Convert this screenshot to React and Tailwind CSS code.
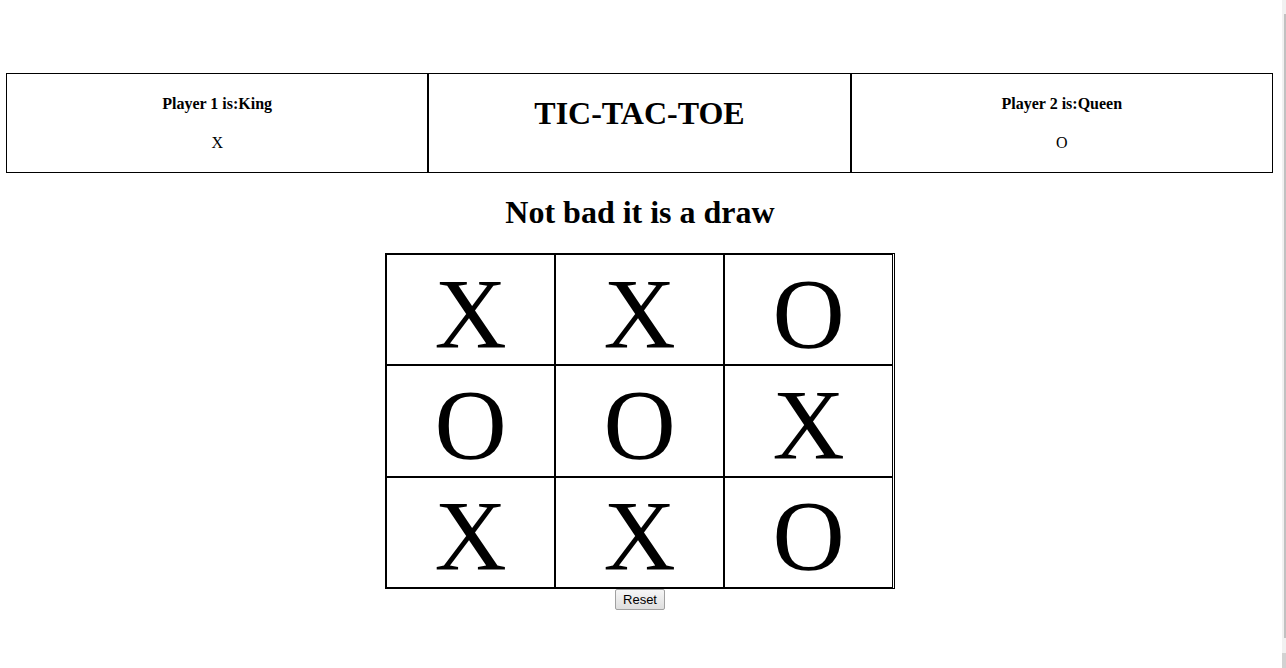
import { useState } from "react";

const finishedGame = ["X", "X", "O", "O", "O", "X", "X", "X", "O"];

const lines = [
  [0, 1, 2], [3, 4, 5], [6, 7, 8],
  [0, 3, 6], [1, 4, 7], [2, 5, 8],
  [0, 4, 8], [2, 4, 6],
];

function getMessage(cells) {
  const line = lines.find(([a, b, c]) => cells[a] && cells[a] === cells[b] && cells[b] === cells[c]);
  if (line) return cells[line[0]] === "X" ? "King wins" : "Queen wins";
  return cells.every(Boolean) ? "Not bad it is a draw" : "";
}

function Player({ number, name, mark }) {
  return (
    <section className="flex-1 border border-black pt-[21px]">
      <h4 className="text-[16px] font-bold leading-[18px]">Player {number} is:{name}</h4>
      <p className="mt-[21px] text-[16px] leading-[18px]">{mark}</p>
    </section>
  );
}

function Board({ cells, onPlay }) {
  return (
    <div className="grid h-[336px] w-[510px] grid-cols-[repeat(3,169px)] grid-rows-3 border border-black">
      {cells.map((mark, i) => (
        <button
          key={i}
          type="button"
          aria-label={`Square ${i + 1} ${mark}`}
          onClick={() => onPlay(i)}
          className="flex min-h-0 items-center justify-center border border-black pt-2 text-[100px] leading-[100px]"
        >
          {mark}
        </button>
      ))}
    </div>
  );
}

function ScrollTrack() {
  return (
    <div aria-hidden="true" className="flex w-1 shrink-0 flex-col bg-[#f1f1f1] pt-3.5">
      <div className="ml-0.5 flex-1 bg-[#c1c1c1]" />
      <div className="mt-[15px] h-[15px] bg-[#d2d2d2]" />
    </div>
  );
}

export default function App() {
  const [cells, setCells] = useState(finishedGame);

  const play = (i) => {
    if (cells[i] || getMessage(cells)) return;
    const mark = cells.filter(Boolean).length % 2 === 0 ? "X" : "O";
    setCells(cells.map((cell, n) => (n === i ? mark : cell)));
  };

  return (
    <div className="flex min-h-screen bg-white font-['Liberation_Serif','Times_New_Roman',serif] text-black">
      <main className="flex flex-1 flex-col items-center pl-1.5 pr-2 pt-[73px] text-center">
        <header className="flex min-h-[100px] w-full pr-px">
          <Player number={1} name="King" mark="X" />
          <div className="flex-1 border border-black pt-[21px]">
            <h1 className="text-[32px] font-bold leading-[37px]">TIC-TAC-TOE</h1>
          </div>
          <Player number={2} name="Queen" mark="O" />
        </header>
        <h1 className="my-[21px] min-h-[38px] text-[32px] font-bold leading-[37px]">{getMessage(cells)}</h1>
        <Board cells={cells} onPlay={play} />
        <button
          type="button"
          onClick={() => setCells(Array(9).fill(""))}
          className="h-[21px] w-[50px] rounded-xs border border-[#a0a0a0] bg-linear-to-b from-[#f6f6f6] to-[#dedede] font-['Liberation_Sans',Arial,sans-serif] text-[13px] leading-[15px]"
        >
          Reset
        </button>
      </main>
      <ScrollTrack />
    </div>
  );
}
